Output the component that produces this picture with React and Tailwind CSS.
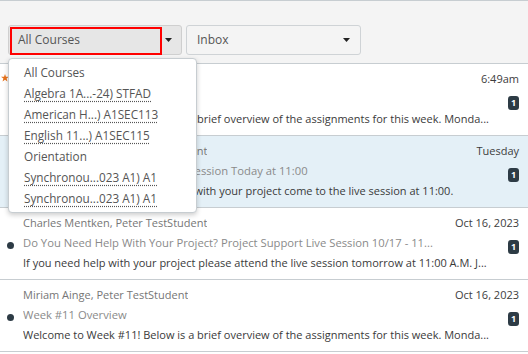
import React from "react";

const courses = [
  { name: "All Courses", link: false },
  { name: "Algebra 1A...-24) STFAD", link: true },
  { name: "American H...) A1SEC113", link: true },
  { name: "English 11...) A1SEC115", link: true },
  { name: "Orientation", link: false },
  { name: "Synchronou...023 A1) A1", link: true },
  { name: "Synchronou...023 A1) A1", link: true },
];

const messages = [
  {
    id: 1,
    from: "Miriam Ainge, Peter TestStudent",
    date: "6:49am",
    subject: "Week #12 Overview",
    preview:
      "Welcome to Week #12! Below is a brief overview of the assignments for this week. Monda...",
    unread: false,
    starred: true,
  },
  {
    id: 2,
    from: "Charles Mentken, Peter TestStudent",
    date: "Tuesday",
    subject: "Reminder: Project Support Live Session Today at 11:00",
    preview: "If you'd like some additional help with your project come to the live session at 11:00.",
    unread: false,
    selected: true,
  },
  {
    id: 3,
    from: "Charles Mentken, Peter TestStudent",
    date: "Oct 16, 2023",
    subject:
      "Do You Need Help With Your Project? Project Support Live Session 10/17 - 11...",
    preview:
      "If you need help with your project please attend the live session tomorrow at 11:00 A.M. J...",
    unread: true,
  },
  {
    id: 4,
    from: "Miriam Ainge, Peter TestStudent",
    date: "Oct 16, 2023",
    subject: "Week #11 Overview",
    preview:
      "Welcome to Week #11! Below is a brief overview of the assignments for this week. Monda...",
    unread: true,
  },
];

function Caret() {
  return (
    <svg width="7" height="4" viewBox="0 0 7 4">
      <path d="M0 0h7L3.5 4z" fill="#222" />
    </svg>
  );
}

function MessageRow({ msg }) {
  return (
    <div
      className={`relative flex h-[72px] border-b border-[#c7cdd1] ${
        msg.selected ? "bg-[#e4f0f7]" : "bg-white"
      }`}
    >
      {/* left gutter: star / unread dot */}
      <div className="relative w-[23px] shrink-0">
        {msg.starred && (
          <svg className="absolute left-[1px] top-[10px]" width="8" height="8" viewBox="0 0 10 10">
            <path d="M5 0l1.2 3.4H10L7 5.6 8.1 9.5 5 7.2 1.9 9.5 3 5.6 0 3.4h3.8z" fill="#e8731c" />
          </svg>
        )}
        {msg.unread && (
          <div className="absolute left-[7px] top-[34px] h-[7px] w-[7px] rounded-full bg-[#2d3b45]" />
        )}
      </div>
      <div className="min-w-0 flex-1 pr-[9px] pt-[8px]">
        <div className="flex items-center justify-between leading-[14px]">
          <span className="truncate text-[11px] text-[#767676]">{msg.from}</span>
          <span className="shrink-0 text-[11px] text-[#3d3d3d]">{msg.date}</span>
        </div>
        <div className="mt-[5px] flex items-start justify-between">
          <span className="truncate text-[11.25px] leading-[16px] text-[#8a8a8a]">{msg.subject}</span>
          <span className="mt-[5px] flex h-[14px] w-[11px] shrink-0 items-center justify-center rounded-[3px] bg-[#2d3b45] text-[9px] font-bold text-white">
            1
          </span>
        </div>
        <div className="overflow-hidden whitespace-nowrap text-[11px] leading-[18px] text-[#3a3a3a]">
          {msg.preview}
        </div>
      </div>
    </div>
  );
}

export default function App() {
  return (
    <div className="relative h-[354px] w-[528px] overflow-hidden bg-white font-['Open_Sans',sans-serif]">
      {/* Header with filters */}
      <div className="flex h-[64px] gap-[4px] border-t border-b border-[#c7cdd1] bg-[#f4f4f4] px-[8px] pt-[24px]">
        <div className="relative flex h-[30px] w-[174px] items-center justify-between rounded-[3px] border border-[#cfcfcf] bg-[#e6e6e6] pl-[9px] pr-[9px]">
          <span className="text-[12px] text-[#555]">All Courses</span>
          <Caret />
          <div className="absolute left-[1px] top-[1px] h-[28px] w-[152px] border-2 border-[#ff0000]" />
        </div>
        <div className="flex h-[30px] w-[175px] items-center justify-between rounded-[3px] border border-[#cfd3d6] bg-[#f4f4f4] pl-[10px] pr-[10px]">
          <span className="text-[12px] text-[#555]">Inbox</span>
          <Caret />
        </div>
      </div>

      {messages.map((m) => (
        <MessageRow key={m.id} msg={m} />
      ))}

      {/* Course dropdown menu */}
      <div className="absolute left-[8px] top-[58px] w-[189px] rounded-[4px] border border-[#c7cdd1] bg-white py-[3px] shadow-[0_2px_5px_rgba(0,0,0,0.2)]">
        {courses.map((c, i) => (
          <div key={i} className="h-[21px] pl-[15px] text-[11.75px] leading-[21px] text-[#555]">
            <span
              className={
                c.link ? "underline decoration-dotted decoration-[#555] underline-offset-[3px]" : ""
              }
            >
              {c.name}
            </span>
          </div>
        ))}
      </div>
    </div>
  );
}
